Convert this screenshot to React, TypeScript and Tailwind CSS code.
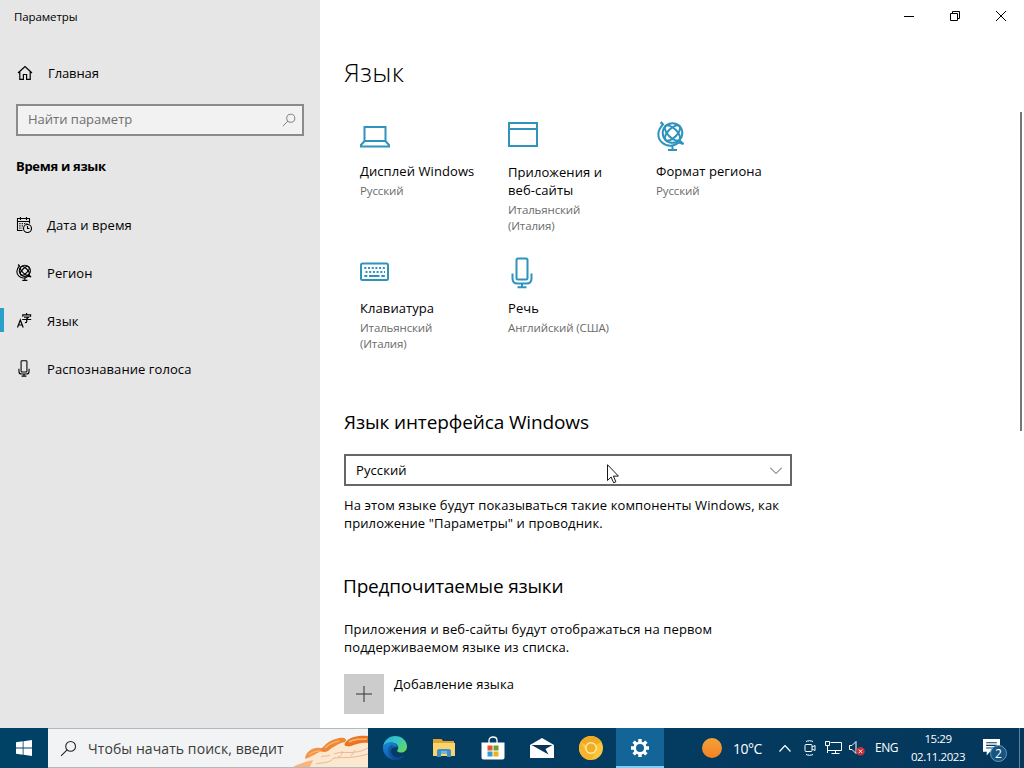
import React from 'react';

interface IconProps {
  className?: string;
}

const HomeIcon: React.FC<IconProps> = ({ className }) => (
  <svg viewBox="0 0 16 16" className={className} fill="none" stroke="currentColor" strokeWidth="1.2">
    <path d="M1 8 8 1.5 15 8M2.8 6.6v7.7h3.6V9.5h3.2v4.8h3.6V6.6" />
  </svg>
);

const SearchIcon: React.FC<IconProps> = ({ className }) => (
  <svg viewBox="0 0 16 16" className={className} fill="none" stroke="currentColor">
    <circle cx="10" cy="6" r="4.6" />
    <path d="M6.7 9.3 1 15" />
  </svg>
);

const CalendarIcon: React.FC<IconProps> = ({ className }) => (
  <svg viewBox="0 0 16 16" className={className} fill="none" stroke="currentColor" strokeWidth="1.1">
    <path d="M6.5 13.5h-5v-12h12v5M1.5 4.5h12M4.5 0v3M10.5 0v3" />
    <path d="M3.300 6.700h8M3.300 8.900h4M3.300 11.100h3" strokeDasharray="1.2 1.2" strokeWidth="1.3" />
    <circle cx="11.5" cy="11.5" r="4" />
    <path d="M11.5 9v2.5h2" />
  </svg>
);

const GlobeIcon: React.FC<IconProps> = ({ className }) => (
  <svg viewBox="0 0 28 30" className={className} fill="none" stroke="currentColor" strokeWidth="2">
    <circle cx="15.5" cy="12" r="9.800" />
    <ellipse cx="15.5" cy="12" rx="4.500" ry="9.800" transform="rotate(-45 15.5 12)" />
    <ellipse cx="15.5" cy="12" rx="4.500" ry="9.800" transform="rotate(45 15.5 12)" />
    <path d="M4 .8 6 3.500C-.5 10 .5 17.500 5 21.500c5 4.500 12 4 16.500 0l5 1.500-4-3.500M3.500 1.500 6.500 4M15.500 25V28.500M11 29h9" />
  </svg>
);

const LanguageIcon: React.FC<IconProps> = ({ className }) => (
  <svg viewBox="0 0 16 16" className={className} fill="none" stroke="currentColor" strokeWidth="1.2">
    <path d="M1.500 14.500 4.300 7l2.900 7.500M2.500 12h3.700" />
    <path d="M10.600 0v2M6.800 3.800V1.900h7.800v1.900M8 4.100h4.700l-2 1.700v2.900c0 .8-.5 1-1.800 1M6.200 6.500h9" />
  </svg>
);

const MicIcon: React.FC<IconProps> = ({ className }) => (
  <svg viewBox="0 0 22 32" className={className} fill="none" stroke="currentColor" strokeWidth="2">
    <rect x="5.500" y="1.500" width="11" height="21" rx="1.500" />
    <path d="M1.500 16.500v5c0 3 2 5 5 5h9c3 0 5-2 5-5v-5M11 26.500V30M6.500 30.300h9" />
  </svg>
);

const LaptopIcon: React.FC<IconProps> = ({ className }) => (
  <svg viewBox="0 0 30 30" className={className} fill="none" stroke="currentColor" strokeWidth="2">
    <path d="M4.500 20V6h21v14M4.500 20h21l3.500 4v1.500H1V24z" />
  </svg>
);

const WindowIcon: React.FC<IconProps> = ({ className }) => (
  <svg viewBox="0 0 30 30" className={className} fill="none" stroke="currentColor" strokeWidth="2">
    <path d="M1 3h28v23H1zM1 9h28" />
  </svg>
);

const KeyboardIcon: React.FC<IconProps> = ({ className }) => (
  <svg viewBox="0 0 30 30" className={className} fill="none" stroke="currentColor" strokeWidth="2">
    <rect x="1" y="6.500" width="27" height="16.500" rx="1.500" />
    <path d="M4.300 11H25M5.500 15H25" strokeDasharray="2 1.700" />
    <path d="M4.300 19h3M9 19h10.500M21.300 19h3.500" />
  </svg>
);

const tiles = [
  { icon: <LaptopIcon className="mt-[3px] size-[30px]" />, name: ['Дисплей Windows'], value: ['Русский'] },
  {
    icon: <WindowIcon className="mt-px size-[30px]" />,
    name: ['Приложения и', 'веб-сайты'],
    value: ['Итальянский', '(Италия)'],
    shift: 'pt-px',
  },
  { icon: <GlobeIcon className="mt-[2px] ml-px h-[30px] w-[28px]" />, name: ['Формат региона'], value: ['Русский'] },
  { icon: <KeyboardIcon className="size-[30px]" />, name: ['Клавиатура'], value: ['Итальянский', '(Италия)'] },
  { icon: <MicIcon className="mt-[2px] ml-[3px] h-[32px] w-[22px]" />, name: ['Речь'], value: ['Английский (США)'] },
];

const navItems = [
  { icon: <CalendarIcon className="-mt-px size-4" />, label: 'Дата и время' },
  { icon: <GlobeIcon className="-mt-px h-[17px] w-4" />, label: 'Регион' },
  { icon: <LanguageIcon className="size-4" />, label: 'Язык', active: true },
  { icon: <MicIcon className="-mt-[2px] mr-px h-[17px] w-[12px]" />, label: 'Распознавание голоса' },
];

const Sidebar = () => (
  <aside className="flex w-[320px] shrink-0 flex-col bg-[#e6e6e6]">
    <div className="h-[34px] pl-[14px] text-[11.500px] leading-[34px] tracking-[-0.100px]">Параметры</div>
    <div className="mt-[15px] flex h-12 items-center pl-[17px]">
      <HomeIcon className="size-4" />
      <span className="ml-[15px] pt-[2px] tracking-[-0.100px]">Главная</span>
    </div>
    <div className="mx-4 mt-[7px] flex h-8 items-center justify-between border-2 border-[#8a8a8a] bg-[#f2f2f2] pr-[6px] pl-[10px] text-[#6e6e6e]">
      <span>Найти параметр</span>
      <SearchIcon className="size-[14px]" />
    </div>
    <h2 className="mt-[20px] pl-4 text-[13px] leading-5 font-bold tracking-[-0.300px]">Время и язык</h2>
    <nav className="mt-[25px]">
      {navItems.map((item) => (
        <div key={item.label} className="flex h-12 items-center">
          <span className={`-mt-[2px] h-6 w-1 ${item.active ? 'bg-[#2a9fcb]' : ''}`} />
          <span className="ml-3 flex w-4 justify-center">{item.icon}</span>
          <span className="ml-[15px] pt-[2px] tracking-[0.080px]">{item.label}</span>
        </div>
      ))}
    </nav>
  </aside>
);

const WindowControls = () => (
  <div className="flex h-8 justify-end">
    <div className="flex w-[46px] items-center justify-center">
      <svg viewBox="0 0 10 10" className="size-[10px]" stroke="#000">
        <path d="M0 5.500h10" />
      </svg>
    </div>
    <div className="flex w-[46px] items-center justify-center">
      <svg viewBox="0 0 10 10" className="size-[10px]" stroke="#000" fill="none">
        <path d="M.5 2.500h7v7h-7zM2.500 2.500v-2h7v7h-2" />
      </svg>
    </div>
    <div className="flex w-[46px] items-center justify-center">
      <svg viewBox="0 0 10 10" className="size-[10px]" stroke="#000">
        <path d="m0 0 10 10M10 0 0 10" />
      </svg>
    </div>
  </div>
);

const Content = () => (
  <main className="relative flex flex-1 flex-col bg-white">
    <WindowControls />
    <div className="pl-6">
      <h1 className="mt-[20px] text-[26.500px] leading-10 font-[350] tracking-[0.200px]">Язык</h1>
      <div className="mt-[26px] grid w-[460px] grid-cols-[148px_148px_148px] pl-4">
        {tiles.map((tile) => (
          <div key={tile.name[0]} className="h-[137px]">
            <div className="flex h-[33px] items-center text-[#2f93bd]">{tile.icon}</div>
            <div className={`mt-[11px] leading-[18px] tracking-[0.080px] ${tile.shift ?? ''}`}>
              {tile.name.map((line) => (
                <div key={line}>{line}</div>
              ))}
            </div>
            <div className="mt-[3px] text-[11.500px] leading-4 tracking-[-0.130px] text-[#6b6b6b]">
              {tile.value.map((line) => (
                <div key={line}>{line}</div>
              ))}
            </div>
          </div>
        ))}
      </div>
      <h2 className="mt-[16px] text-[19px] leading-7 tracking-[-0.120px]">Язык интерфейса Windows</h2>
      <div className="mt-[18px] flex h-8 w-[448px] items-center justify-between border-2 border-[#666] pr-2 pl-[10px]">
        <span className="pt-px tracking-[0.100px]">Русский</span>
        <svg viewBox="0 0 12 7" className="h-[7px] w-3" fill="none" stroke="#555">
          <path d="m0 .5 6 6 6-6" />
        </svg>
      </div>
      <p className="mt-[10px] w-[450px] leading-[18px] tracking-[0.110px]">
        На этом языке будут показываться такие компоненты Windows, как
        <br />
        приложение "Параметры" и проводник.
      </p>
      <h2 className="mt-[40px] -ml-px text-[19px] leading-7 tracking-[-0.200px]">Предпочитаемые языки</h2>
      <p className="mt-[20px] w-[450px] leading-[18px] tracking-[0.140px]">
        Приложения и веб-сайты будут отображаться на первом
        <br />
        поддерживаемом языке из списка.
      </p>
      <div className="mt-[18px] flex">
        <div className="flex size-10 items-center justify-center bg-[#ccc]">
          <svg viewBox="0 0 16 16" className="size-4" stroke="#333">
            <path d="M8 0v16M0 8h16" />
          </svg>
        </div>
        <span className="ml-[10px] leading-5 tracking-[0.100px]">Добавление языка</span>
      </div>
    </div>

    {/* Scrollbar thumb */}
    <div className="absolute top-[112px] right-[2px] h-[319px] w-[2px] bg-[#767676]" />

    {/* Mouse pointer */}
    <svg viewBox="0 0 12 20" className="absolute top-[464px] left-[287px] h-5 w-3" fill="#fff" stroke="#000" strokeWidth="0.900">
      <path d="M.5.7v15.800l3.600-3.500 2.500 5.800 2.300-1-2.500-5.700h5z" />
    </svg>
  </main>
);

const SearchArt = () => (
  <svg viewBox="0 0 78 38" className="h-[38px] w-[78px]">
    <path d="M3 38c5-3 9-3 12-6l6-8c8-5 12-3 19-6 10-7 20-7 38-6v26z" fill="#fbe8cf" />
    <path d="M3 38c4-3 8-3 12-5l8-2-3 7z" fill="#f7b680" />
    <path d="M15 30c1-8 8-12 15-11 3 0 5 1 3 3-6 1-11 6-18 8z" fill="#f2934a" />
    <path d="M31 20c4-4 8-9 18-11 5-1 9 1 6 4-6 1-12 5-17 9-4 2-8 1-7-2z" fill="#ee8638" />
    <path d="M55 14c4-6 13-8 23-7v7c-6-1-11 1-17 3-4 1-8 0-6-3z" fill="#ea7426" />
    <path d="M19 26c3-3 7-4 11-4M35 19c4-4 9-6 14-7M59 13c5-3 10-3 18-3" stroke="#f9b268" strokeWidth="1.600" fill="none" />
    <path d="M26 35c7-2 12 0 18-6 9-1 17 1 34-4M44 25c8-4 20 2 34-6M48 28c4-1 4-3 4-6M61 27l4-6M31 28c3-2 6 0 9-2" stroke="#e6b291" strokeWidth="0.900" fill="none" />
  </svg>
);

const EdgeIcon = () => (
  <svg viewBox="0 0 24 24" className="size-6">
    <defs>
      <linearGradient id="edgeTop" x1="0" y1="0" x2="1" y2="0.600">
        <stop offset="0" stopColor="#28a9e6" />
        <stop offset="0.550" stopColor="#35c6c4" />
        <stop offset="1" stopColor="#62d66b" />
      </linearGradient>
      <linearGradient id="edgeBottom" x1="0" y1="0" x2="0.600" y2="1">
        <stop offset="0" stopColor="#1c8bd8" />
        <stop offset="1" stopColor="#0b4fa0" />
      </linearGradient>
    </defs>
    <path d="M0 11C1 4 6 0 12 0c7 0 12 5 12 10.500 0 4-3 6-6 6-3 0-4.500-1-3.500-2.500C17 10 13 6.500 8.500 6.500 4.500 6.500 1.500 8 0 11z" fill="url(#edgeTop)" />
    <path d="M0 11c1.500-3 4.500-4.500 8.500-4.500 4 0 6.500 2.500 6.300 5-1.300-1-6.800-.5-6.800 4 0 4 5 7 9.500 5.500 2-.6 3.500-1.500 4.500-2.500C20 22 16.500 24 12 24 5 24-.5 18 0 11z" fill="url(#edgeBottom)" />
    <path d="M8 9C4 12 4 19 12 24c4 0 7-1.500 9.500-5-5 3.500-13 2-13.500-3.500-.1-2 1-4 3-4.800C10.500 9.500 9 9 8 9z" fill="#123f8c" opacity="0.550" />
  </svg>
);

const ExplorerIcon = () => (
  <svg viewBox="0 0 22 20" className="h-5 w-[22px]">
    <path d="M0 1h8.500L10 3h11v4H0z" fill="#e0a52f" />
    <path d="M0 5h22v13H0z" fill="#fbd46c" />
    <path d="M4 19v-6.500L5.500 11h11l1.500 1.500V19h-4v-3.500H8V19z" fill="#3f8fc8" />
    <path d="M8 13h6v2.500H8z" fill="#72b4e0" />
  </svg>
);

const StoreIcon = () => (
  <svg viewBox="0 0 24 24" className="size-6">
    <path d="M8 7V4.500C8 2.500 9.500 1 12 1s4 1.500 4 3.500V7" fill="none" stroke="#fff" strokeWidth="1.300" />
    <path d="M.5 6.500h23v15c0 1.200-.8 2-2 2h-19c-1.200 0-2-.8-2-2z" fill="#fff" />
    <path d="M6.500 9.500h5v5h-5z" fill="#e5532d" />
    <path d="M12.500 9.500h5v5h-5z" fill="#6ba32c" />
    <path d="M6.500 15.500h5v5h-5z" fill="#2f9fd8" />
    <path d="M12.500 15.500h5v5h-5z" fill="#f0b01e" />
  </svg>
);

const MailIcon = () => (
  <svg viewBox="0 0 24 20" className="h-5 w-6">
    <path d="M0 7 12 0l12 7v13H0z" fill="#fff" />
    <path d="M1.500 7H22.500L15.500 11l3 5.500z" fill="#0a3556" />
  </svg>
);

const CanaryIcon = () => (
  <svg viewBox="0 0 24 24" className="size-6">
    <circle cx="12" cy="12" r="12" fill="#fbc63c" />
    <path d="M12 12 1.600 6A12 12 0 0 1 22.400 6z" fill="#f0aa24" />
    <path d="M1.600 6A12 12 0 0 0 12 24l5-9H7z" fill="#f7b32c" />
    <circle cx="12" cy="12" r="5.900" fill="#ffe9a6" />
    <circle cx="12" cy="12" r="4.500" fill="#f0ae24" />
  </svg>
);

const SettingsIcon = () => (
  <svg viewBox="0 0 20 20" className="size-5" fill="none" stroke="#fff">
    <circle cx="10" cy="10" r="5.300" strokeWidth="2.600" />
    <path
      d="M10 1v3M10 16v3M1 10h3M16 10h3M3.600 3.600l2.200 2.200M14.200 14.200l2.200 2.200M3.600 16.400l2.200-2.200M14.200 5.800l2.200-2.200"
      strokeWidth="3.400"
    />
  </svg>
);

const apps = [
  { id: 'edge', icon: <EdgeIcon /> },
  { id: 'explorer', icon: <ExplorerIcon /> },
  { id: 'store', icon: <StoreIcon /> },
  { id: 'mail', icon: <MailIcon /> },
  { id: 'canary', icon: <CanaryIcon /> },
  { id: 'settings', icon: <SettingsIcon />, active: true },
];

const Taskbar = () => (
  <footer className="flex h-10 bg-linear-to-r from-[#004266] to-[#05375c] text-white">
    <div className="flex w-12 items-center justify-center">
      <svg viewBox="0 0 16 16" className="size-4" fill="#fff">
        <path d="M0 2.300 6.700 1.300v6.200H0zM7.500 1.200 16 0v7.500H7.500zM0 8.400h6.700v6.300L0 13.700zM7.500 8.400H16V16l-8.500-1.200z" />
      </svg>
    </div>
    <div className="flex w-[320px] items-center border-y border-[#b5b8ba] bg-[#f2f3f4] pl-3 text-[#3a3a3a]">
      <SearchIcon className="size-[17px] text-[#222]" />
      <span className="ml-[11px] w-[202px] text-[14px] tracking-[0.080px] whitespace-nowrap">Чтобы начать поиск, введит</span>
      <SearchArt />
    </div>
    <div className="flex gap-px pl-[3px]">
      {apps.map((app) => (
        <div
          key={app.id}
          className={`flex w-12 items-center justify-center border-b-2 pt-[2px] ${app.active ? 'border-[#7fd0f5] bg-[#126596]' : 'border-transparent'}`}
        >
          {app.icon}
        </div>
      ))}
    </div>
    <div className="ml-auto flex items-center">
      <span className="size-5 rounded-full bg-linear-to-b from-[#f5a13c] to-[#f58220]" />
      <span className="ml-[11px] w-[29px] text-[14px] tracking-[-0.500px] whitespace-nowrap">10°C</span>
      <svg viewBox="0 0 12 7" className="ml-[17px] h-[7px] w-3" fill="none" stroke="#fff" strokeWidth="1.200">
        <path d="m.5 6.500 5.500-6 5.500 6" />
      </svg>
      <svg viewBox="0 0 12 16" className="ml-[13px] h-4 w-3" fill="none" stroke="#fff">
        <rect x="1" y="4.500" width="7" height="7" rx="1" />
        <path d="m8 7 3-1.500v5L8 9M2 1.500C4 .5 7 .5 9 1.500M2 14.500c2 1 5 1 7 0" />
      </svg>
      <svg viewBox="0 0 17 14" className="ml-[9px] h-[14px] w-[17px]" fill="none" stroke="#fff">
        <path d="M5.500 1.500h11v8h-11M.5.500h4v4h-4zM2.500 4.500v7.500M2.500 9.500h5M10.500 9.500v3M6.500 12.500h8" />
      </svg>
      <svg viewBox="0 0 16 16" className="ml-[7px] size-4" fill="none" stroke="#fff">
        <path d="M.5 5.500h2.500l4-4v12l-4-4H.5z" />
        <circle cx="11.500" cy="11.300" r="4.300" fill="#c9303a" stroke="none" />
        <path d="m9.800 9.600 3.400 3.400M13.200 9.600 9.800 13" />
      </svg>
      <span className="ml-[10px] w-[25px] text-[12px] tracking-[-0.500px]">ENG</span>
      <div className="ml-[10px] w-[56px] text-center text-[11.500px] leading-[18px] tracking-[-0.450px] whitespace-nowrap">
        <div>15:29</div>
        <div>02.11.2023</div>
      </div>
      <div className="relative ml-[17px] h-[18px] w-[36px]">
        <svg viewBox="0 0 16 16" className="size-[17px]">
          <path d="M0 0h16v12H6.500L3.500 15.500V12H0z" fill="#fff" />
          <path d="M3 3.500h10M3 6h10M3 8.500h7" stroke="#0a3a5e" />
        </svg>
        <span className="absolute top-[6px] left-[7px] flex size-[17px] items-center justify-center rounded-full border border-[#5d9cc4] bg-[#17547f] text-[12px] leading-none">
          2
        </span>
      </div>
      <div className="h-10 w-[5px] border-l border-[#5f8198]" />
    </div>
  </footer>
);

const App = () => (
  <div className="flex h-[768px] w-[1024px] flex-col overflow-hidden font-['Open_Sans','Noto_Sans',sans-serif] text-[13px] text-black">
    <div className="flex h-[728px]">
      <Sidebar />
      <Content />
    </div>
    <Taskbar />
  </div>
);

export default App;
